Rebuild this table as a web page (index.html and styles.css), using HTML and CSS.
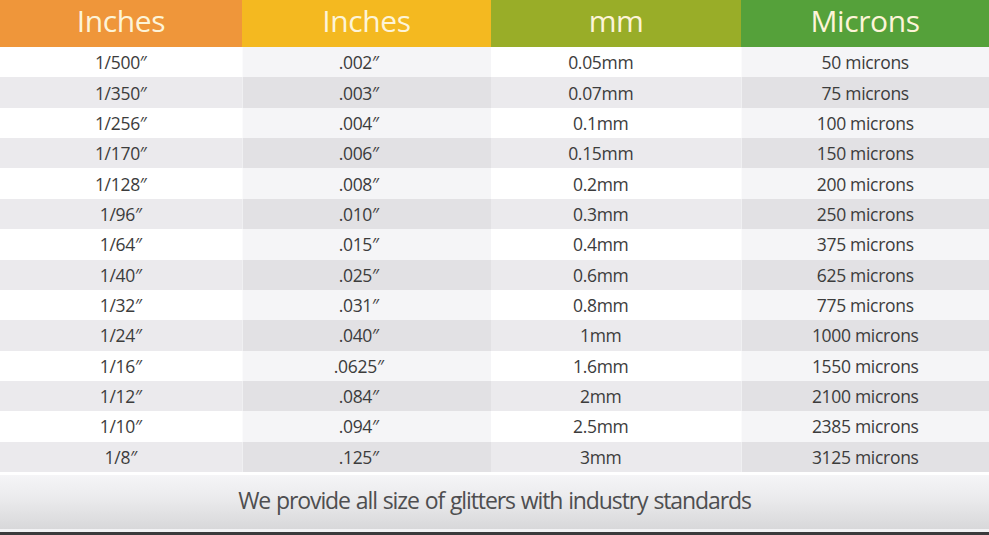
FILE: index.html
```html
<!DOCTYPE html>
<html lang="en">
<head>
    <meta charset="UTF-8">
    <meta name="viewport" content="width=device-width, initial-scale=1.0">
    <title>Glitter Size Chart</title>
    <link rel="stylesheet" href="styles.css">
</head>
<body>
    <div class="chart">
        <table class="sizes">
            <thead>
                <tr>
                    <th class="orange">Inches</th>
                    <th class="yellow">Inches</th>
                    <th class="olive">mm</th>
                    <th class="green">Microns</th>
                </tr>
            </thead>
            <tbody>
                <tr><td>1/500″</td><td>.002″</td><td>0.05mm</td><td>50 microns</td></tr>
                <tr><td>1/350″</td><td>.003″</td><td>0.07mm</td><td>75 microns</td></tr>
                <tr><td>1/256″</td><td>.004″</td><td>0.1mm</td><td>100 microns</td></tr>
                <tr><td>1/170″</td><td>.006″</td><td>0.15mm</td><td>150 microns</td></tr>
                <tr><td>1/128″</td><td>.008″</td><td>0.2mm</td><td>200 microns</td></tr>
                <tr><td>1/96″</td><td>.010″</td><td>0.3mm</td><td>250 microns</td></tr>
                <tr><td>1/64″</td><td>.015″</td><td>0.4mm</td><td>375 microns</td></tr>
                <tr><td>1/40″</td><td>.025″</td><td>0.6mm</td><td>625 microns</td></tr>
                <tr><td>1/32″</td><td>.031″</td><td>0.8mm</td><td>775 microns</td></tr>
                <tr><td>1/24″</td><td>.040″</td><td>1mm</td><td>1000 microns</td></tr>
                <tr><td>1/16″</td><td>.0625″</td><td>1.6mm</td><td>1550 microns</td></tr>
                <tr><td>1/12″</td><td>.084″</td><td>2mm</td><td>2100 microns</td></tr>
                <tr><td>1/10″</td><td>.094″</td><td>2.5mm</td><td>2385 microns</td></tr>
                <tr><td>1/8″</td><td>.125″</td><td>3mm</td><td>3125 microns</td></tr>
            </tbody>
        </table>
        <div class="footer">We provide all size of glitters with industry standards</div>
    </div>
</body>
</html>
```

FILE: styles.css
```css
body {
    margin: 0;
    font-family: "Open Sans", "Noto Sans", sans-serif;
    background-color: #ffffff;
}
.chart {
    width: 989px;
    height: 535px;
    overflow: hidden;
}
.sizes {
    width: 989px;
    border-collapse: collapse;
    table-layout: fixed;
}
.sizes th {
    height: 47px;
    padding: 0 0 6px 0;
    box-sizing: border-box;
    font-size: 30px;
    font-weight: normal;
    color: #fdf4d8;
    text-align: center;
    letter-spacing: -0.4px;
}
.sizes th:nth-child(1) { width: 242px; }
.sizes th:nth-child(2) { width: 249px; }
.sizes th:nth-child(3) { width: 250px; }
.orange { background-color: #ef963a; }
.yellow { background-color: #f4b920; }
.olive { background-color: #99ad28; }
.green { background-color: #55a13a; }
.sizes td {
    height: 30.36px;
    padding: 0;
    font-size: 17.5px;
    color: #3c3c3c;
    text-align: center;
    letter-spacing: -0.3px;
    background-color: #ffffff;
}
.sizes td:nth-child(2),
.sizes td:nth-child(4) {
    background-color: #f5f5f7;
    border-left: 1px solid #fbfbfc;
}
.sizes td:nth-child(2) {
    padding-right: 16px;
}
.sizes td:nth-child(3) {
    padding-right: 30px;
}
.sizes tbody tr:nth-child(even) td {
    background-color: #ebeaed;
}
.sizes tbody tr:nth-child(even) td:nth-child(2),
.sizes tbody tr:nth-child(even) td:nth-child(4) {
    background-color: #e2e1e4;
    border-left: 1px solid #f0f0f2;
}
.footer {
    height: 57px;
    margin-top: 3px;
    border-bottom: 3px solid #3a3a3c;
    box-shadow: inset 0 -3px 0 #f2f2f4;
    background: linear-gradient(to bottom, #f5f5f7 0%, #ebebed 40%, #d6d6d8 100%);
    color: #4e4e50;
    font-size: 23px;
    letter-spacing: -1.1px;
    word-spacing: 1px;
    text-align: center;
    line-height: 50px;
}
```
